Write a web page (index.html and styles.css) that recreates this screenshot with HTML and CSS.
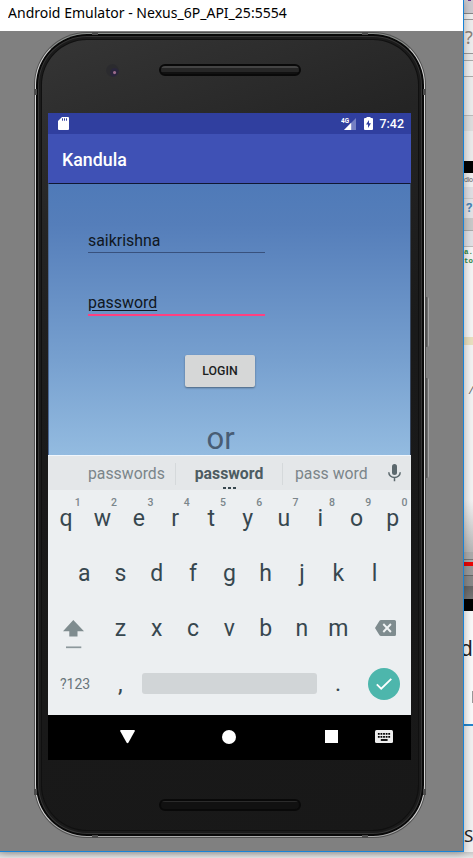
FILE: index.html
```html
<!DOCTYPE html>
<html lang="en">
<head>
<meta charset="utf-8">
<title>Android Emulator - Nexus_6P_API_25:5554</title>
<link rel="stylesheet" href="styles.css">
</head>
<body>
<div class="desktop">
  <main class="window">
    <header class="titlebar"><span class="title">Android Emulator - Nexus_6P_API_25:5554</span></header>
    <div class="stage">
      <div class="phone">
        <i class="band tl"></i><i class="band tr"></i><i class="band bl"></i><i class="band br"></i>
        <i class="band lt"></i><i class="band rt"></i><i class="band lb"></i><i class="band rb"></i>
        <i class="side power"></i><i class="side volume"></i>
        <div class="face">
          <div class="top"><i class="camera"></i><i class="speaker"></i></div>
          <div class="screen">
            <div class="status">
              <svg class="sd" viewBox="0 0 11 13"><path fill="#fff" d="M4 0h6q1 0 1 1v11q0 1-1 1H1q-1 0-1-1V4z"/><path stroke="#303f9f" stroke-width="1" d="M4.500 1.300v2.400M6.500 1.300v2.400M8.500 1.300v2.400"/></svg>
              <svg class="signal" viewBox="0 0 16 14"><path fill="#7580c3" d="M15 1v12H3z"/><path fill="#fff" d="M10.200 5.800V13H3z"/><text x="0" y="6" font-size="7" font-weight="700" textLength="8" lengthAdjust="spacingAndGlyphs" fill="#fff">4G</text></svg>
              <svg class="battery" viewBox="0 0 9 13"><path fill="#fff" d="M2.500 0h4v1H8q1 0 1 1v10q0 1-1 1H1q-1 0-1-1V2q0-1 1-1h1.500z"/><path fill="#303f9f" d="M5 3 2 7.500h2V11l3-4.700H5z"/></svg>
              <span class="clock">7:42</span>
            </div>
            <div class="appbar">Kandula</div>
            <div class="content">
              <div class="field">saikrishna</div>
              <div class="field active"><u>password</u></div>
              <div class="login">LOGIN</div>
              <div class="or">or</div>
            </div>
            <div class="suggest">
              <span class="word">passwords</span>
              <span class="word mid">password<i class="dots"></i></span>
              <span class="word">pass word</span>
              <svg class="mic" viewBox="0 0 13 18"><rect x="4" y="0" width="5" height="11" rx="2.500" fill="#5b686d"/><path d="M.8 8.200a5.700 5.300 0 0 0 11.400 0M6.500 13.500v3.700" fill="none" stroke="#5b686d" stroke-width="1.500"/></svg>
            </div>
            <div class="keyboard">
              <div class="row"><b>q<sup>1</sup></b><b>w<sup>2</sup></b><b>e<sup>3</sup></b><b>r<sup>4</sup></b><b>t<sup>5</sup></b><b>y<sup>6</sup></b><b>u<sup>7</sup></b><b>i<sup>8</sup></b><b>o<sup>9</sup></b><b>p<sup>0</sup></b></div>
              <div class="row second"><b>a</b><b>s</b><b>d</b><b>f</b><b>g</b><b>h</b><b>j</b><b>k</b><b>l</b></div>
              <div class="row third">
                <span class="shift"><svg viewBox="0 0 21 30"><path fill="#7f8c8f" d="M10.300 1 21 12.200h-6.500V17.500H6.300v-5.300H0z"/><path stroke="#8d989c" stroke-width="1.700" d="M3 28.300h15.300"/></svg></span>
                <b>z</b><b>x</b><b>c</b><b>v</b><b>b</b><b>n</b><b>m</b>
                <span class="erase"><svg viewBox="0 0 21 16"><path fill="#7f8c8f" d="M6 0h13.500Q21 0 21 1.500v13q0 1.500-1.500 1.500H6Q5 16 4.500 15.200L0 8 4.500.8Q5 0 6 0z"/><path stroke="#f0f3f4" stroke-width="1.900" d="m8.300 4 7.600 8m0-8-7.600 8"/></svg></span>
              </div>
              <div class="row fourth">
                <span class="num">?123</span><span class="comma">,</span><span class="space"></span><span class="dot">.</span>
                <span class="enter"><svg viewBox="0 0 16 12"><path fill="none" stroke="#fff" stroke-width="1.800" d="m.8 6.300 4.400 4.400L15.300.8"/></svg></span>
              </div>
            </div>
            <div class="nav">
              <svg class="back" viewBox="0 0 15 14"><path fill="#fff" d="M1 0h13q1.300 0 .7 1.200L8.500 12.500q-1 1.600-2 0L.3 1.200Q-.3 0 1 0z"/></svg>
              <i class="home"></i><i class="recent"></i>
              <svg class="kbd" viewBox="0 0 18 13"><rect width="18" height="13" rx="1.500" fill="#eee"/><path stroke="#000" stroke-width="1.800" stroke-dasharray="1.800 .8" d="M2.900 3.900h12.500M2.900 6.900h12.500"/><path stroke="#000" stroke-width="1.800" d="M5.800 10h6.800"/></svg>
            </div>
          </div>
          <div class="bottom"><i class="speaker"></i></div>
        </div>
      </div>
    </div>
  </main>
  <aside class="behind">
    <div class="s1"></div><div class="s2"></div><div class="s3">?</div><div class="s4"></div><div class="s5"></div><div class="s6"></div><div class="s7"></div>
    <div class="black"></div><div class="s8">dio</div><div class="s9"></div><div class="s10">?</div><div class="s11"></div><div class="s12"></div>
    <div class="code"><span>a.</span><span>to</span></div><div class="mark"></div><div class="slash">/</div><div class="bar"></div><div class="red"></div><div class="controls"></div><div class="black"></div>
    <div class="page"><span class="letter">d</span><i class="box"></i></div><div class="last">S</div>
  </aside>
</div>
</body>
</html>
```
FILE: styles.css
```css
* { box-sizing: border-box; }
body { margin: 0; background: #ddd; font-family: Roboto, sans-serif; }
svg { display: block; flex: none; }
.desktop { display: grid; grid-template-columns: 464px 9px; width: 473px; height: 858px; overflow: hidden; background: linear-gradient(#c4c4c4 852px, #c9c9c9 852px, #e6e6e6 858px); }
.window { position: relative; z-index: 1; width: 464px; height: 852px; border-right: 1px solid #1883d7; border-bottom: 1px solid #1883d7; background: #808080; box-shadow: 0 1px 8px rgba(0,0,0,.3); }
.titlebar { height: 31px; padding: 2px 0 0 8px; background: #fff; color: #000; }
.title { display: inline-block; white-space: nowrap; transform-origin: left; font: 15px/20px "Noto Sans", sans-serif; transform: scaleX(.935); }
.stage { padding: 1px 0 0 34px; }

.phone { position: relative; width: 392px; height: 806px; padding: 1px; border-radius: 53px; background: #515151; }
.phone::before { content: ""; position: absolute; inset: 1px; border: 1px solid #d4d4d4; border-top-color: #8d918e; border-bottom-color: #aaa; border-radius: 52px; }
.face { width: 388px; height: 802px; margin: 1px; padding: 0 13px 0 12px; border-radius: 51px; background: linear-gradient(160deg, #363636 0, #242424 22%, #1a1a1a 45%, #181818 100%); box-shadow: inset 0 0 0 2px #080808, inset 0 0 0 3px #343434, inset 0 0 0 5px #1b1b1b, inset 0 0 0 6px #101010; }
.top { position: relative; display: flex; justify-content: center; height: 79px; padding-top: 30px; }
.camera { position: absolute; left: 58px; top: 30px; width: 13px; height: 13px; border-radius: 50%; background: radial-gradient(circle at 66% 66%, #9b6b8c 0 1px, #29253b 2px 4px, #2b2b2e 5px); }
.speaker { width: 142px; height: 12px; border: 2px solid #090909; border-radius: 6px; background: linear-gradient(#444 0 2px, #262626 2px 6px, #111 6px); }
.bottom { display: flex; justify-content: center; padding-top: 39px; }
.bottom .speaker { background: linear-gradient(#2b2b2b 0 1px, #111 1px); }
.band { position: absolute; z-index: 2; background: #4b4b4b; }
.tl, .tr { top: 0; width: 6px; height: 3px; }
.bl, .br { bottom: 0; width: 6px; height: 3px; }
.tl, .bl { left: 58px; }
.tr, .br { right: 58px; }
.lt, .rt { top: 57px; width: 3px; height: 6px; }
.lb, .rb { bottom: 43px; width: 3px; height: 6px; }
.lt, .lb { left: 0; }
.rt, .rb { right: 0; }
.side { position: absolute; left: 392px; width: 3px; border-radius: 0 2px 2px 0; background: linear-gradient(90deg, #555 1px, #6d6d6d 1px 2px, #a3a3a3 2px); }
.power { top: 265px; height: 50px; }
.volume { top: 346px; height: 100px; }

.screen { width: 363px; height: 647px; background: #000; }
.status { display: flex; align-items: center; height: 21px; padding: 0 7px 0 10px; background: #303f9f; color: #fff; }
.sd { width: 11px; height: 13px; }
.signal { width: 16px; height: 14px; margin-left: auto; }
.battery { width: 9px; height: 13px; margin: 0 6px 0 7px; }
.clock { font-size: 12.500px; font-weight: 500; }
.appbar { height: 49px; padding-left: 14px; background: #3f51b5; color: #fff; font-size: 17.800px; font-weight: 500; line-height: 51px; }
.content { height: 272px; padding: 44px 39px 0; border-top: 1px solid #101832; border-left: 1px solid #4b6894; border-right: 1px solid #34445c; background: linear-gradient(#fff, #fff) 100% 0 / 1px 9px no-repeat border-box, linear-gradient(#4f7ab8, #557eba 15%, #77a0cf 65%, #93bbe0); color: #101722; }
.field { width: 177px; height: 25px; border-bottom: 1px solid #38517d; font-size: 15.900px; line-height: 25px; }
.active { height: 26px; margin-top: 37px; border-bottom: 2px solid #ff4081; }
.active u { text-underline-offset: 2px; text-decoration-thickness: 1px; }
.login { width: 70px; height: 32px; margin: 39px 0 0 97px; border-radius: 2px; background: #d6d7d7; box-shadow: 0 1px 2px rgba(0,0,0,.4); color: #1c1e1e; font-size: 12.300px; font-weight: 500; line-height: 33px; text-align: center; }
.or { height: 35px; margin: 34px 0 0 118.500px; color: #485d75; font-size: 31px; line-height: 35px; }
.suggest { display: flex; align-items: center; height: 35px; padding: 2px 10px 0 26px; border-top: 1px solid #f0f6fc; background: #e4e7e9; color: #7b858a; }
.word { flex: none; width: 108px; padding-left: 14px; font-size: 15.800px; line-height: 22px; white-space: nowrap; }
.word:first-child { width: 101px; }
.word.mid { position: relative; padding: 0; border: solid #d5d9db; border-width: 0 1px; color: #4d5c62; font-weight: 700; text-align: center; }
.word:nth-child(3) { padding-left: 12px; width: 103px; }
.dots { position: absolute; left: 47px; bottom: -4px; width: 13px; height: 2px; background: linear-gradient(90deg, #37474f 3px, transparent 3px 5px, #37474f 5px 8px, transparent 8px 10px, #37474f 10px); }
.mic { width: 13px; height: 18px; margin: -2px 0 0 auto; }
.keyboard { height: 225px; padding-top: 1px; background: #eceff1; color: #37474f; }
.row { display: flex; align-items: center; height: 55px; }
.row b { position: relative; flex: none; width: 36.300px; font-size: 23px; font-weight: 400; line-height: 55px; text-align: center; }
.row sup { position: absolute; right: 3px; top: 7px; width: 7px; color: #7b868b; font-size: 10.500px; font-weight: 500; line-height: 10px; }
.second { padding-left: 18px; }
.third { padding-left: 15px; }
.third b { left: .3px; }
.shift { width: 39px; }
.shift svg { width: 21px; height: 30px; margin-top: 11px; }
.erase { margin: -2px 0 0 19px; }
.erase svg { width: 21px; height: 16px; }
.num { width: 57px; padding-left: 12px; color: #69757b; font-size: 14px; }
.comma { width: 37px; padding: 1px 0 0 13px; font-size: 24px; }
.space { width: 175px; height: 21px; border-radius: 3px; background: #d1d5d7; }
.dot { width: 51px; padding-left: 18px; font-size: 23px; }
.enter { display: grid; place-items: center; width: 32px; height: 32px; border-radius: 50%; background: #4db6ac; }
.enter svg { width: 16px; height: 12px; }
.nav { display: flex; align-items: center; height: 44px; padding: 0 18px 1px 72px; }
.back { width: 15px; height: 14px; }
.home { width: 14px; height: 14px; margin-left: 87px; border-radius: 50%; background: #fff; }
.recent { width: 13px; height: 13px; margin-left: 89px; background: #fff; }
.kbd { width: 18px; height: 13px; margin-left: auto; }

.behind { overflow: hidden; width: 9px; height: 852px; color: #666; }
.behind div { overflow: hidden; white-space: nowrap; }
.s1 { height: 14px; border-bottom: 1px solid #888; background: linear-gradient(90deg, transparent 4px, #6d3292 4px 7px, transparent 7px) 0 0 / 9px 1px no-repeat #cccacf; }
.s2 { height: 5px; background: #eee; }
.s3 { height: 35px; padding-left: 1px; border: solid #999; border-width: 1px 0; background: #ededed; color: #8b8178; font: 18px/34px "Noto Sans", sans-serif; }
.s4 { height: 6px; background: #e8e8e8; }
.s5 { height: 17px; border: solid #aaa; border-width: 1px 0; background: #eee; }
.s6 { height: 39px; border-bottom: 1px solid #bbb; background: #ebebeb; }
.s7 { height: 45px; background: linear-gradient(#ddd 15px, #eaeaea 15px); }
.black { height: 12px; background: #000; }
.s8 { height: 14px; background: #eee; font-size: 7px; line-height: 14px; letter-spacing: -.3px; }
.s9 { height: 12px; border-bottom: 1px solid #ccc; background: #dedee2; }
.s10 { height: 19px; padding-left: 2px; background: #e2e2e5; color: #4e86b4; font-size: 13px; font-weight: 700; line-height: 18px; }
.s11 { height: 13px; background: #c8c8c8; border-bottom: 1px solid #aaa; }
.s12 { height: 16px; border-bottom: 1px solid #bbb; background: #e0e0e4; }
.code { height: 90px; padding-top: 1px; background: #f4f4f4; color: #348a45; font: bold 7.500px/9px "Liberation Mono", monospace; }
.code span { display: block; }
.mark { height: 8px; background: #e8dfbf; }
.slash { height: 207px; padding: 41px 0 0 4px; background: linear-gradient(#f2f2f2 75%, #b5b5b5); font: 11px/10px "Liberation Mono", monospace; }
.bar { height: 10px; background: linear-gradient(#aaa 7px, #777 7px 8px, #aaa 8px); }
.red { height: 4px; background: #e80505; }
.controls { height: 33px; background: linear-gradient(#999 9px, #666 9px 10px, #888 10px 20px, #666 20px 21px, #777); }
.page { position: relative; height: 115px; border-bottom: 2px solid #2385cc; background: #f9f9f9; }
.letter { display: block; margin: 23px 0 0 -4px; color: #222; font: 21px/28px "Noto Sans", sans-serif; }
.box { position: absolute; left: 8px; top: 80px; width: 4px; height: 12px; background: #999; }
.last { height: 133px; padding: 97px 0 0 0; background: #f0f0f0; color: #222; font: 17px/26px "Noto Sans", sans-serif; }
```
